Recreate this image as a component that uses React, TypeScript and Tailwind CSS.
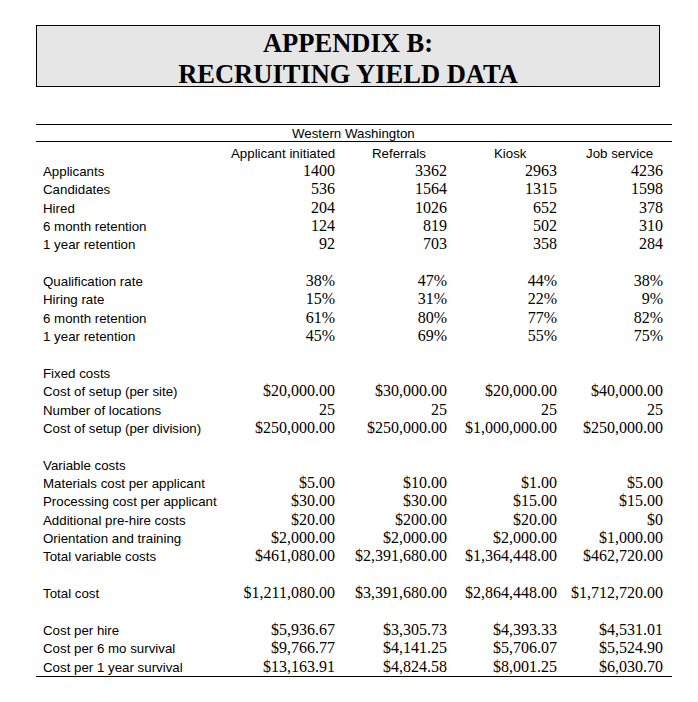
import React from "react";

type Row = { label: string; values?: string[] } | null;

const rows: Row[] = [
  { label: "Applicants", values: ["1400", "3362", "2963", "4236"] },
  { label: "Candidates", values: ["536", "1564", "1315", "1598"] },
  { label: "Hired", values: ["204", "1026", "652", "378"] },
  { label: "6 month retention", values: ["124", "819", "502", "310"] },
  { label: "1 year retention", values: ["92", "703", "358", "284"] },
  null,
  { label: "Qualification rate", values: ["38%", "47%", "44%", "38%"] },
  { label: "Hiring rate", values: ["15%", "31%", "22%", "9%"] },
  { label: "6 month retention", values: ["61%", "80%", "77%", "82%"] },
  { label: "1 year retention", values: ["45%", "69%", "55%", "75%"] },
  null,
  { label: "Fixed costs" },
  { label: "Cost of setup (per site)", values: ["$20,000.00", "$30,000.00", "$20,000.00", "$40,000.00"] },
  { label: "Number of locations", values: ["25", "25", "25", "25"] },
  { label: "Cost of setup (per division)", values: ["$250,000.00", "$250,000.00", "$1,000,000.00", "$250,000.00"] },
  null,
  { label: "Variable costs" },
  { label: "Materials cost per applicant", values: ["$5.00", "$10.00", "$1.00", "$5.00"] },
  { label: "Processing cost per applicant", values: ["$30.00", "$30.00", "$15.00", "$15.00"] },
  { label: "Additional pre-hire costs", values: ["$20.00", "$200.00", "$20.00", "$0"] },
  { label: "Orientation and training", values: ["$2,000.00", "$2,000.00", "$2,000.00", "$1,000.00"] },
  { label: "Total variable costs", values: ["$461,080.00", "$2,391,680.00", "$1,364,448.00", "$462,720.00"] },
  null,
  { label: "Total cost", values: ["$1,211,080.00", "$3,391,680.00", "$2,864,448.00", "$1,712,720.00"] },
  null,
  { label: "Cost per hire", values: ["$5,936.67", "$3,305.73", "$4,393.33", "$4,531.01"] },
  { label: "Cost per 6 mo survival", values: ["$9,766.77", "$4,141.25", "$5,706.07", "$5,524.90"] },
  { label: "Cost per 1 year survival", values: ["$13,163.91", "$4,824.58", "$8,001.25", "$6,030.70"] },
];

const grid = "grid grid-cols-[188px_104px_112px_110px_106px] auto-rows-[18.37px]";
const sans = "font-['Liberation_Sans',Arial,sans-serif] text-[13.3px] leading-[18.37px] whitespace-nowrap";
const serif = "font-['Liberation_Serif','Times_New_Roman',serif] text-[16px] leading-[15px] text-right whitespace-nowrap";

export default function App() {
  return (
    <div className="min-h-[702px] w-[698px] bg-white text-black">
      <div className="pt-[25px] pl-[36px]">
        <div className="h-[62px] w-[624px] border border-black bg-[#e6e6e6] pt-[1.5px] text-center font-['Liberation_Serif','Times_New_Roman',serif] text-[26.5px] font-bold leading-[31px]">
          <div>APPENDIX B:</div>
          <div>RECRUITING YIELD DATA</div>
        </div>
      </div>

      <div className="ml-[36px] mt-[37px] w-[636px]">
        <div className="h-px bg-black" />
        <div className="h-[16px] pl-[256px] pt-[1.5px] font-['Liberation_Sans',Arial,sans-serif] text-[13.3px] leading-[14.5px]">
          Western Washington
        </div>
        <div className="h-px bg-black" />
        <div className="pl-[7px] pt-[2.5px]">
          <div className={grid}>
            <div />
            <div className={`${sans} text-right`}>Applicant initiated</div>
            <div className={`${sans} pl-[37px]`}>Referrals</div>
            <div className={`${sans} pl-[47px]`}>Kiosk</div>
            <div className={`${sans} pl-[29px]`}>Job service</div>
            {rows.map((r, i) =>
              r === null ? (
                <div key={i} className="col-span-5" />
              ) : (
                <React.Fragment key={i}>
                  <div className={sans}>{r.label}</div>
                  {(r.values ?? ["", "", "", ""]).map((v, j) => (
                    <div key={j} className={serif}>
                      {v}
                    </div>
                  ))}
                </React.Fragment>
              )
            )}
          </div>
        </div>
        <div className="-mt-[1px] h-px bg-black" />
      </div>
    </div>
  );
}
